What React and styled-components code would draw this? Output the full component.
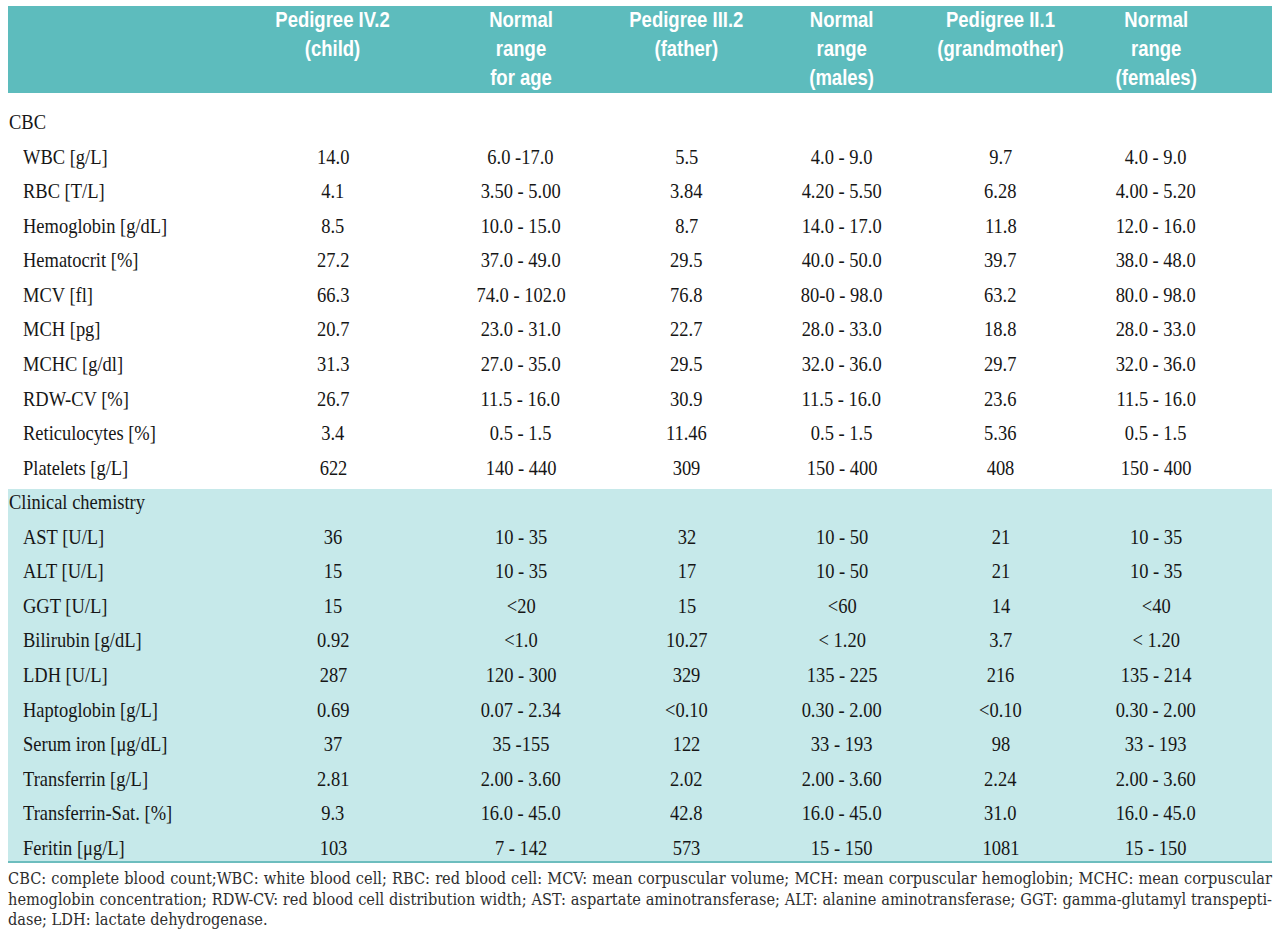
import React from "react";
import styled, { createGlobalStyle } from "styled-components";

const GlobalStyle = createGlobalStyle`
  html, body {
    margin: 0;
    padding: 0;
    background: #fff;
  }
`;

// shared column grid: label + six value columns, a little room on the right
const COLS = "226.5px 197px 178.5px 153px 157.5px 160px 151px";

const Page = styled.div`
  width: 1264px;
  padding: 6px 8px 0;
  font-family: "Liberation Serif", "Times New Roman", serif;
  color: #161616;
`;

const Head = styled.div`
  display: grid;
  grid-template-columns: ${COLS};
  padding-right: 40.5px;
  height: 87px;
  background: #5dbcbd;
  margin-bottom: 12px;
`;

const HeadCell = styled.div`
  text-align: center;
  font-family: "Liberation Sans", Arial, sans-serif;
  font-weight: 700;
  font-size: 21.5px;
  line-height: 29px;
  color: #fff;
`;

// the original table uses a condensed face, squeeze the regular one
const Squeeze = styled.span`
  display: inline-block;
  white-space: nowrap;
  transform: scaleX(${(p) => p.$x || 0.84});
  transform-origin: ${(p) => (p.$left ? "left center" : "center center")};
`;

const Row = styled.div`
  display: grid;
  grid-template-columns: ${COLS};
  padding-right: 40.5px;
  height: 34.57px;
  align-items: center;
  font-size: 22px;
  line-height: 34.57px;
`;

const Label = styled.div`
  padding-left: ${(p) => (p.$section ? "1px" : "15px")};
`;

const Value = styled.div`
  text-align: center;
`;

const Band = styled.div`
  display: flex;
  flex-direction: column;
  background: #c6e9ea;
  margin-top: 4px;
  border-bottom: 2px solid #6dbdbe;

  & > ${Row}:first-child {
    margin-top: -4px;
  }
  & > ${Row}:last-child {
    margin-bottom: -4px;
  }
`;

const Notes = styled.div`
  margin-top: 6px;
  font-family: "DejaVu Serif", serif;
  font-stretch: condensed;
  font-size: 16.2px;
  line-height: 20.5px;
  color: #2e2e2e;
`;

const NoteLine = styled.div`
  text-align: ${(p) => (p.$last ? "left" : "justify")};
  text-align-last: ${(p) => (p.$last ? "left" : "justify")};
  white-space: nowrap;
`;

const headers = [
  ["Pedigree IV.2", "(child)"],
  ["Normal", "range", "for age"],
  ["Pedigree III.2", "(father)"],
  ["Normal", "range", "(males)"],
  ["Pedigree II.1", "(grandmother)"],
  ["Normal", "range", "(females)"],
];

const cbc = [
  ["WBC [g/L]", "14.0", "6.0 -17.0", "5.5", "4.0 - 9.0", "9.7", "4.0 - 9.0"],
  ["RBC [T/L]", "4.1", "3.50 - 5.00", "3.84", "4.20 - 5.50", "6.28", "4.00 - 5.20"],
  ["Hemoglobin [g/dL]", "8.5", "10.0 - 15.0", "8.7", "14.0 - 17.0", "11.8", "12.0 - 16.0"],
  ["Hematocrit [%]", "27.2", "37.0 - 49.0", "29.5", "40.0 - 50.0", "39.7", "38.0 - 48.0"],
  ["MCV [fl]", "66.3", "74.0 - 102.0", "76.8", "80-0 - 98.0", "63.2", "80.0 - 98.0"],
  ["MCH [pg]", "20.7", "23.0 - 31.0", "22.7", "28.0 - 33.0", "18.8", "28.0 - 33.0"],
  ["MCHC [g/dl]", "31.3", "27.0 - 35.0", "29.5", "32.0 - 36.0", "29.7", "32.0 - 36.0"],
  ["RDW-CV [%]", "26.7", "11.5 - 16.0", "30.9", "11.5 - 16.0", "23.6", "11.5 - 16.0"],
  ["Reticulocytes [%]", "3.4", "0.5 - 1.5", "11.46", "0.5 - 1.5", "5.36", "0.5 - 1.5"],
  ["Platelets [g/L]", "622", "140 - 440", "309", "150 - 400", "408", "150 - 400"],
];

const chemistry = [
  ["AST [U/L]", "36", "10 - 35", "32", "10 - 50", "21", "10 - 35"],
  ["ALT [U/L]", "15", "10 - 35", "17", "10 - 50", "21", "10 - 35"],
  ["GGT [U/L]", "15", "<20", "15", "<60", "14", "<40"],
  ["Bilirubin [g/dL]", "0.92", "<1.0", "10.27", "< 1.20", "3.7", "< 1.20"],
  ["LDH [U/L]", "287", "120 - 300", "329", "135 - 225", "216", "135 - 214"],
  ["Haptoglobin [g/L]", "0.69", "0.07 - 2.34", "<0.10", "0.30 - 2.00", "<0.10", "0.30 - 2.00"],
  ["Serum iron [\u03bcg/dL]", "37", "35 -155", "122", "33 - 193", "98", "33 - 193"],
  ["Transferrin [g/L]", "2.81", "2.00 - 3.60", "2.02", "2.00 - 3.60", "2.24", "2.00 - 3.60"],
  ["Transferrin-Sat. [%]", "9.3", "16.0 - 45.0", "42.8", "16.0 - 45.0", "31.0", "16.0 - 45.0"],
  ["Feritin [\u03bcg/L]", "103", "7 - 142", "573", "15 - 150", "1081", "15 - 150"],
];

const notes = [
  "CBC: complete blood count;WBC: white blood cell; RBC: red blood cell: MCV: mean corpuscular volume; MCH: mean corpuscular hemoglobin; MCHC: mean corpuscular",
  "hemoglobin concentration; RDW-CV: red blood cell distribution width; AST: aspartate aminotransferase;  ALT: alanine aminotransferase; GGT: gamma-glutamyl transpepti-",
  "dase; LDH: lactate dehydrogenase.",
];

const SectionRow = ({ title }) => (
  <Row>
    <Label $section>
      <Squeeze $left>{title}</Squeeze>
    </Label>
  </Row>
);

const DataRow = ({ cells }) => {
  const [label, ...values] = cells;
  return (
    <Row>
      <Label>
        <Squeeze $left>{label}</Squeeze>
      </Label>
      {values.map((v, i) => (
        <Value key={i}>
          <Squeeze>{v}</Squeeze>
        </Value>
      ))}
    </Row>
  );
};

export default function App() {
  return (
    <>
      <GlobalStyle />
      <Page>
        <Head>
          <div />
          {headers.map((lines, i) => (
            <HeadCell key={i}>
              <Squeeze $x={0.86}>
                {lines.map((l, j) => (
                  <div key={j}>{l}</div>
                ))}
              </Squeeze>
            </HeadCell>
          ))}
        </Head>

        <SectionRow title="CBC" />
        {cbc.map((r) => (
          <DataRow key={r[0]} cells={r} />
        ))}

        <Band>
          <SectionRow title="Clinical chemistry" />
          {chemistry.map((r) => (
            <DataRow key={r[0]} cells={r} />
          ))}
        </Band>

        <Notes>
          {notes.map((n, i) => (
            <NoteLine key={i} $last={i === notes.length - 1}>
              {n}
            </NoteLine>
          ))}
        </Notes>
      </Page>
    </>
  );
}
